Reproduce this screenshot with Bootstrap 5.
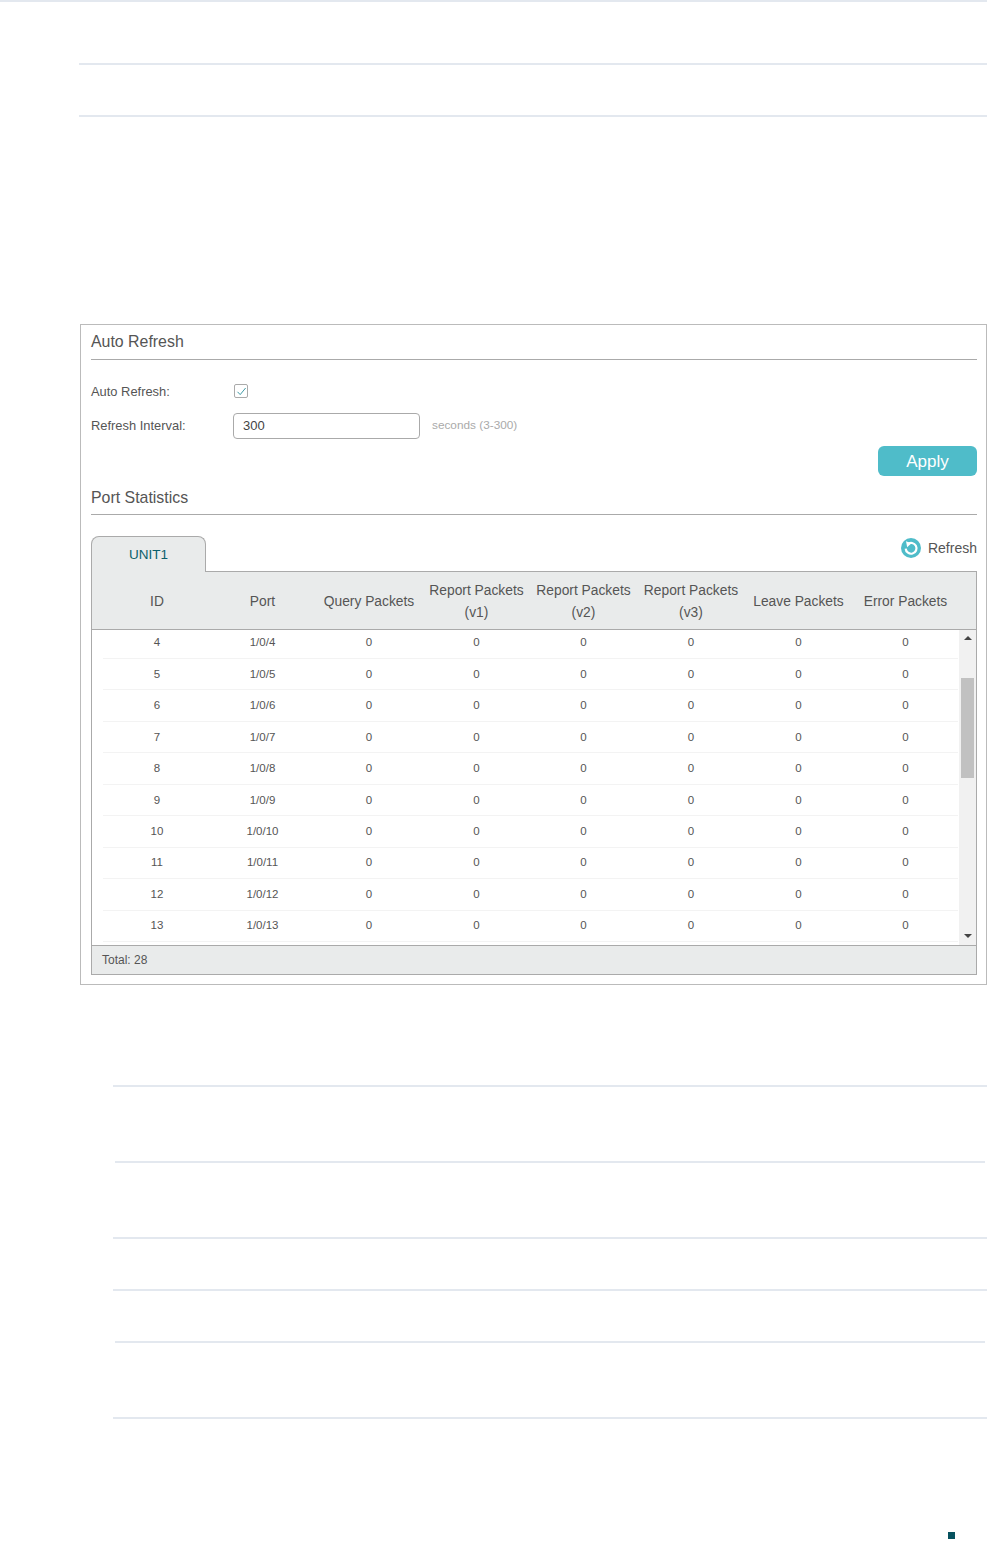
<!DOCTYPE html>
<html lang="en">
<head>
<meta charset="utf-8">
<title>Port Statistics</title>
<link href="https://cdn.jsdelivr.net/npm/bootstrap@5.3.0/dist/css/bootstrap.min.css" rel="stylesheet">
<style>
body{background:#fff;font-family:"Liberation Sans",Arial,sans-serif;color:#555;margin:0;height:1542px;overflow:hidden}
.rule{height:2px;background:#e3e8ef}
.r-top{margin-bottom:61px}
.r-a{margin-left:79px;margin-bottom:50px}
.r-b{margin-left:79px}
.r-c{margin-left:113px}
.r-d{margin-left:115px;margin-right:2px}
.gap-74{margin-bottom:74px}
.gap-50{margin-bottom:50px}
.panel-box{margin:207px 0 100px 80px;border:1px solid #bbb;padding:0 9px 9px 10px;height:661px}
.sec-title{font-size:15.9px;color:#555;border-bottom:1px solid #aaa;line-height:20px}
.t1{height:35px;padding-top:7px}
.t2{height:39px;padding-top:12px}
.form-line{height:26px;font-size:12.9px;color:#555}
.f1{margin-top:18px}
.f1 .lab{padding-top:1px}
.f2{margin-top:9px}
.lab{width:142px}
.chk{width:14px;height:14px;border:1px solid #aaa;border-radius:2px;margin-left:1px}
.num-in.form-control{width:187px;height:26px;padding:0 9px 1px;font-size:13px;color:#444;border:1px solid #aaa;border-radius:4px;min-height:0}
.hint{font-size:11.8px;color:#aaa;margin-left:12px}
.apply-row{margin-top:7px}
.btn.apply-btn{width:99px;height:30px;padding:1px 0 0;background:#4fbcc9;border:0;border-radius:6px;color:#fff;font-size:17px;line-height:29px}
.tab-row{margin-top:21px;height:36px;position:relative;z-index:1}
.nav-tabs.tab-strip{border:0}
.tab-strip .nav-link.active{width:115px;height:36px;padding:9px 0 0;text-align:center;background:#e9ebeb;border:1px solid #aaa;border-bottom:0;border-radius:8px 8px 0 0;color:#0b5f6b;font-size:13.5px;line-height:18px;margin:0}
.refresh-wrap{padding-top:2px;gap:7px}
.refresh-txt{font-size:14px;color:#555;line-height:20px}
.tbl-box{margin-top:-1px;border:1px solid #aaa;height:404px;width:886px}
.grid-head{background:#e9ebeb;height:58px;border-bottom:1px solid #aaa;padding-left:12px}
.stat-tbl.table{table-layout:fixed;width:855px;margin:0;--bs-table-bg:transparent;color:#555}
.stat-tbl col:nth-child(1){width:106px}
.stat-tbl col:nth-child(2){width:105px}
.stat-tbl col:nth-child(3){width:108px}
.stat-tbl col:nth-child(4){width:107px}
.stat-tbl col:nth-child(5){width:107px}
.stat-tbl col:nth-child(6){width:108px}
.stat-tbl col:nth-child(7){width:107px}
.stat-tbl col:nth-child(8){width:107px}
.stat-tbl th{font-weight:400;font-size:13.8px;line-height:22px;height:57px;padding:2px 0 0;text-align:center;vertical-align:middle;border:0;color:#555;white-space:nowrap}
.stat-tbl td{font-size:11.5px;height:31.45px;padding:.5px 0 0 2px;text-align:center;vertical-align:middle;border:0;border-bottom:1px solid #f3f3f3;color:#555;box-shadow:none}
.stat-tbl tr:first-child td{height:28.5px;padding-top:0;padding-bottom:3px}
.grid-body{height:315px;padding-left:11px}
.scroll-col{width:17px;margin-left:auto;background:#f1f1f1}
.arr-up{width:0;height:0;border:4px solid transparent;border-top:0;border-bottom:4px solid #444;margin:6px auto 0}
.arr-dn{width:0;height:0;border:4px solid transparent;border-bottom:0;border-top:4px solid #444;margin:auto auto 7px}
.thumb{width:13px;height:100px;background:#c1c1c1;margin:38px auto 0}
.grid-foot{background:#e9ebeb;border-top:1px solid #aaa;height:29px;font-size:12px;line-height:28px;padding-left:10px;color:#555}
.sq{width:7px;height:7px;background:#07525f;margin:113px 0 0 948px}
</style>
</head>
<body>
<div class="rule r-top"></div>
<div class="rule r-a"></div>
<div class="rule r-b"></div>

<div class="panel-box">
  <div class="sec-title t1">Auto Refresh</div>
  <div class="form-line f1 d-flex align-items-center">
    <span class="lab">Auto Refresh:</span>
    <span class="chk d-inline-flex align-items-center justify-content-center">
      <svg width="11" height="11" viewBox="0 0 11 11"><path d="M1.5 5.8 4.2 8.6 9.6 2" fill="none" stroke="#3f9aa6" stroke-width="1"/></svg>
    </span>
  </div>
  <div class="form-line f2 d-flex align-items-center">
    <label class="lab" for="iv">Refresh Interval:</label>
    <input id="iv" class="form-control num-in" type="text" value="300">
    <span class="hint">seconds (3-300)</span>
  </div>
  <div class="apply-row d-flex justify-content-end">
    <button type="button" class="btn apply-btn">Apply</button>
  </div>
  <div class="sec-title t2">Port Statistics</div>
  <div class="tab-row d-flex justify-content-between">
    <ul class="nav nav-tabs tab-strip">
      <li class="nav-item"><a class="nav-link active" href="#">UNIT1</a></li>
    </ul>
    <div class="d-flex align-items-start refresh-wrap refresh-txt">
      <svg width="20" height="20" viewBox="0 0 20 20"><circle cx="10" cy="10" r="10" fill="#4fbcc9"/><path d="M6.6 6.2A5.4 5.4 0 1 1 4.7 10.6" fill="none" stroke="#fff" stroke-width="2.2"/><path d="M5 3.2 10.4 5.2 6.2 9.2Z" fill="#fff"/></svg>
      <span>Refresh</span>
    </div>
  </div>
  <div class="tbl-box d-flex flex-column">
    <div class="grid-head">
      <table class="table stat-tbl">
        <colgroup><col><col><col><col><col><col><col><col></colgroup>
        <thead><tr><th>ID</th><th>Port</th><th>Query Packets</th><th>Report Packets<br>(v1)</th><th>Report Packets<br>(v2)</th><th>Report Packets<br>(v3)</th><th>Leave Packets</th><th>Error Packets</th></tr></thead>
      </table>
    </div>
    <div class="grid-body d-flex">
      <table class="table stat-tbl align-self-start">
        <colgroup><col><col><col><col><col><col><col><col></colgroup>
        <tbody>
          <tr><td>4</td><td>1/0/4</td><td>0</td><td>0</td><td>0</td><td>0</td><td>0</td><td>0</td></tr>
          <tr><td>5</td><td>1/0/5</td><td>0</td><td>0</td><td>0</td><td>0</td><td>0</td><td>0</td></tr>
          <tr><td>6</td><td>1/0/6</td><td>0</td><td>0</td><td>0</td><td>0</td><td>0</td><td>0</td></tr>
          <tr><td>7</td><td>1/0/7</td><td>0</td><td>0</td><td>0</td><td>0</td><td>0</td><td>0</td></tr>
          <tr><td>8</td><td>1/0/8</td><td>0</td><td>0</td><td>0</td><td>0</td><td>0</td><td>0</td></tr>
          <tr><td>9</td><td>1/0/9</td><td>0</td><td>0</td><td>0</td><td>0</td><td>0</td><td>0</td></tr>
          <tr><td>10</td><td>1/0/10</td><td>0</td><td>0</td><td>0</td><td>0</td><td>0</td><td>0</td></tr>
          <tr><td>11</td><td>1/0/11</td><td>0</td><td>0</td><td>0</td><td>0</td><td>0</td><td>0</td></tr>
          <tr><td>12</td><td>1/0/12</td><td>0</td><td>0</td><td>0</td><td>0</td><td>0</td><td>0</td></tr>
          <tr><td>13</td><td>1/0/13</td><td>0</td><td>0</td><td>0</td><td>0</td><td>0</td><td>0</td></tr>
        </tbody>
      </table>
      <div class="scroll-col d-flex flex-column">
        <div class="arr-up"></div>
        <div class="thumb"></div>
        <div class="arr-dn"></div>
      </div>
    </div>
    <div class="grid-foot">Total: 28</div>
  </div>
</div>

<div class="rule r-c gap-74"></div>
<div class="rule r-d gap-74"></div>
<div class="rule r-c gap-50"></div>
<div class="rule r-c gap-50"></div>
<div class="rule r-d gap-74"></div>
<div class="rule r-c"></div>
<div class="sq"></div>
<script src="https://cdn.jsdelivr.net/npm/bootstrap@5.3.0/dist/js/bootstrap.bundle.min.js"></script>
</body>
</html>
